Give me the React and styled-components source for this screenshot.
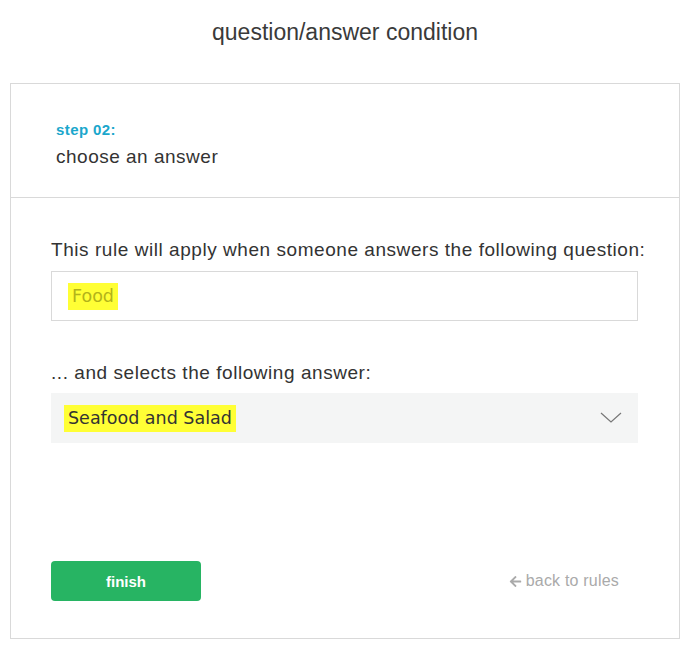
import styled, { createGlobalStyle } from "styled-components";
import { FaArrowLeft } from "react-icons/fa";

const Global = createGlobalStyle`
  body {
    margin: 0;
    background: #fff;
    font-family: "Liberation Sans", Arial, sans-serif;
    color: #333;
  }
`;

const Page = styled.div`
  padding: 17px 10px 20px;
`;

const Title = styled.h1`
  margin: 0 0 36px;
  text-align: center;
  font-size: 23px;
  line-height: 30px;
  font-weight: 400;
  color: #3a3a3a;
  letter-spacing: 0px;
`;

const Card = styled.div`
  width: 670px;
  box-sizing: border-box;
  border: 1px solid #d9d9d9;
`;

const Header = styled.div`
  padding: 37px 45px 29px;
  border-bottom: 1px solid #d9d9d9;
`;

const Step = styled.div`
  font-size: 15px;
  line-height: 18px;
  font-weight: 700;
  color: #1ba7cc;
  letter-spacing: 0.4px;
`;

const StepTitle = styled.div`
  margin-top: 7px;
  font-size: 19px;
  line-height: 22px;
  color: #333;
  letter-spacing: 0.5px;
`;

const Body = styled.div`
  padding: 41px 41px 37px 40px;
`;

const Label = styled.div`
  font-size: 19px;
  line-height: 22px;
  color: #333;
  letter-spacing: 0.55px;
  white-space: nowrap;
  margin-top: ${(p) => (p.$first ? "0" : "41px")};
  margin-bottom: ${(p) => (p.$first ? "10px" : "9px")};
`;

const Highlight = styled.span`
  background: #ffff35;
  padding: 3px 4px 4px;
`;

const QuestionBox = styled.div`
  height: 50px;
  box-sizing: border-box;
  border: 1px solid #d9d9d9;
  display: flex;
  align-items: center;
  padding-left: 16px;
  font-family: "DejaVu Sans", Verdana, sans-serif;
  font-size: 17.5px;
  color: #b3b31a;
`;

const Select = styled.div`
  height: 50px;
  background: #f4f5f5;
  display: flex;
  align-items: center;
  justify-content: space-between;
  padding: 0 16px 0 13px;
  font-family: "DejaVu Sans", Verdana, sans-serif;
  font-size: 17.5px;
  color: #333;
`;

const Footer = styled.div`
  margin-top: 118px;
  display: flex;
  align-items: center;
  justify-content: space-between;
  padding-right: 19px;
`;

const FinishButton = styled.button`
  width: 150px;
  height: 40px;
  border: none;
  border-radius: 4px;
  background: #27b463;
  color: #fff;
  font-family: inherit;
  font-size: 15px;
  font-weight: 700;
  cursor: pointer;
`;

const BackLink = styled.a`
  display: flex;
  align-items: center;
  gap: 4px;
  font-size: 16px;
  color: #aaa;
  text-decoration: none;
  letter-spacing: 0.2px;
`;

const Chevron = () => (
  <svg width="22" height="12" viewBox="0 0 22 12">
    <polyline points="1,1 11,10 21,1" fill="none" stroke="#777" strokeWidth="1.2" />
  </svg>
);

export default function App() {
  return (
    <Page>
      <Global />
      <Title>question/answer condition</Title>
      <Card>
        <Header>
          <Step>step 02:</Step>
          <StepTitle>choose an answer</StepTitle>
        </Header>
        <Body>
          <Label $first>This rule will apply when someone answers the following question:</Label>
          <QuestionBox>
            <Highlight>Food</Highlight>
          </QuestionBox>
          <Label>... and selects the following answer:</Label>
          <Select>
            <Highlight>Seafood and Salad</Highlight>
            <Chevron />
          </Select>
          <Footer>
            <FinishButton>finish</FinishButton>
            <BackLink href="#">
              <FaArrowLeft size={13} />
              back to rules
            </BackLink>
          </Footer>
        </Body>
      </Card>
    </Page>
  );
}
